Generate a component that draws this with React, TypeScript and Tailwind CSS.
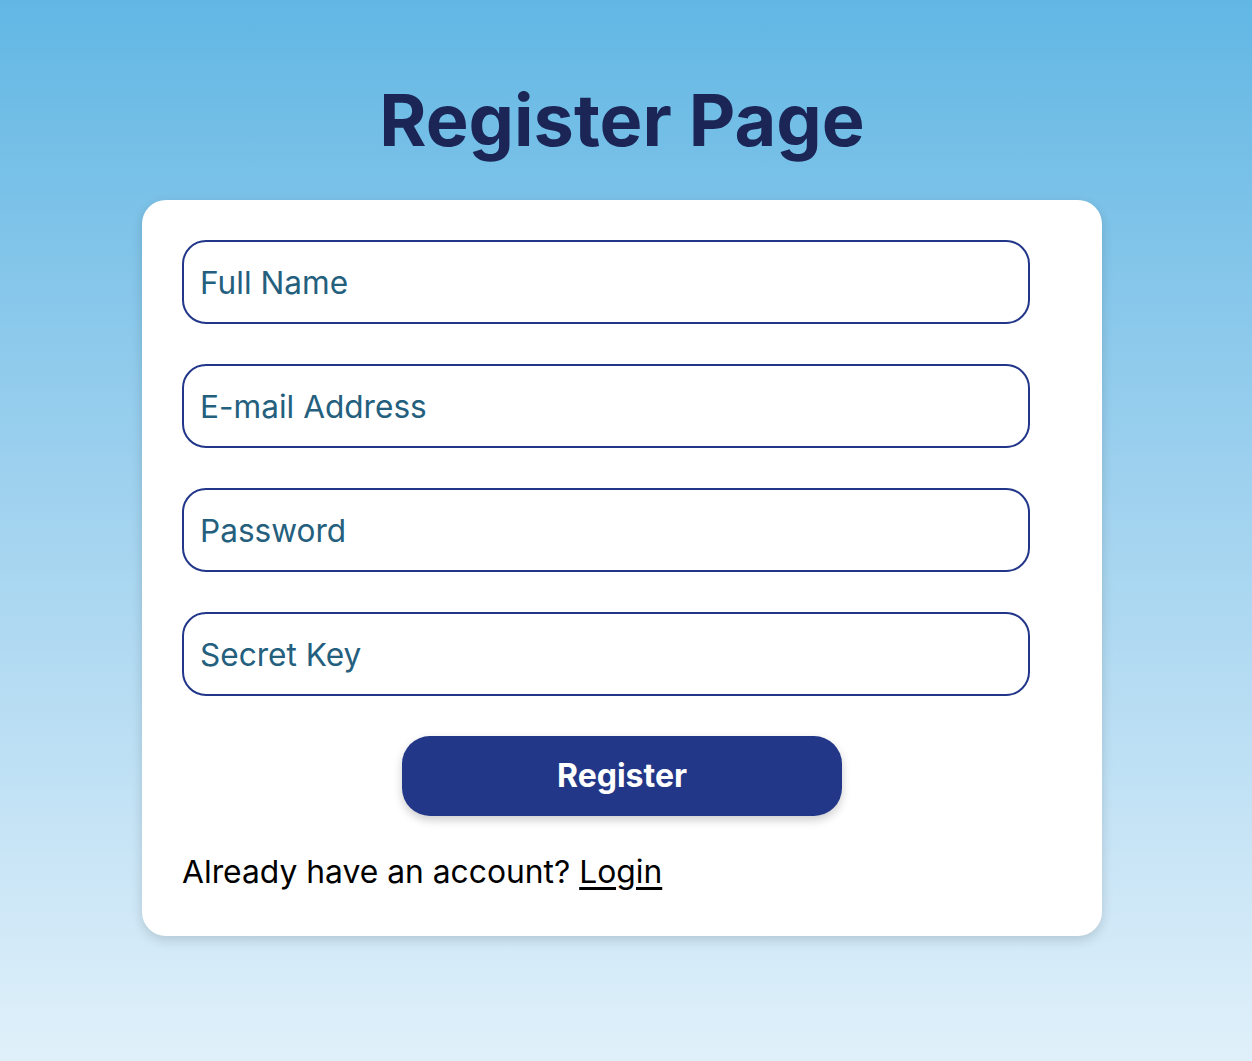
import React from 'react'

const fields = ['Full Name', 'E-mail Address', 'Password', 'Secret Key']

const App = () => {
  return (
    <div
      className="min-h-screen w-full bg-gradient-to-b from-[#61b7e4] to-[#e0f0fa] flex flex-col items-center pr-2"
      style={{ fontFamily: 'Inter, "Noto Sans", sans-serif' }}
    >
      <h1 className="pt-[77px] mb-[37px] text-[72px] leading-[86px] font-bold text-[#1b2657]">
        Register Page
      </h1>
      <div className="w-[960px] bg-white rounded-[24px] shadow-[0_4px_12px_rgba(0,0,0,0.15)] px-10 pt-10 pb-[46px]">
        <div className="flex flex-col gap-10">
          {fields.map((f) => (
            <input
              key={f}
              type={f === 'Password' ? 'password' : 'text'}
              placeholder={f}
              className="w-[848px] h-[84px] rounded-[24px] border-2 border-[#22368a] px-4 text-[31.6px] text-[#24607e] placeholder:text-[#24607e] outline-none"
            />
          ))}
        </div>
        <div className="flex justify-center mt-10">
          <button className="w-[440px] h-20 rounded-[28px] bg-[#233788] text-white text-[32px] font-bold shadow-[0_4px_10px_rgba(0,0,0,0.2)]">
            Register
          </button>
        </div>
        <p className="mt-[38px] text-[31.8px] leading-9 text-black">
          Already have an account? <a href="#" className="underline underline-offset-4">Login</a>
        </p>
      </div>
    </div>
  )
}

export default App
